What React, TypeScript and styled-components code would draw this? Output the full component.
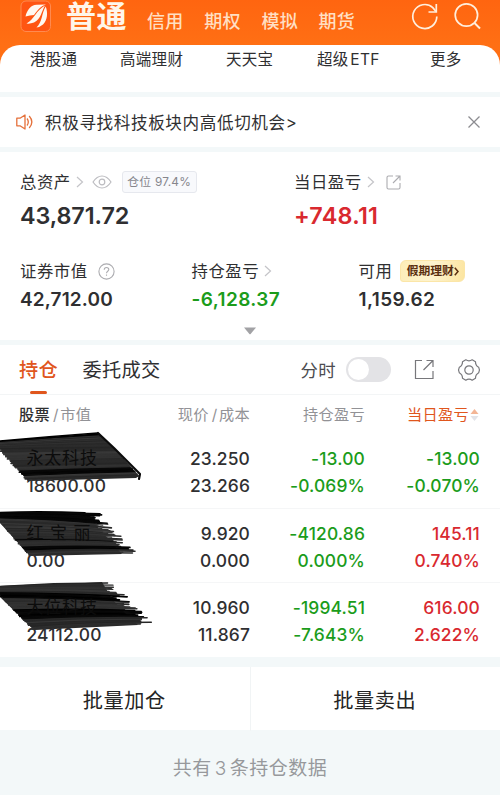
import React from "react";
import styled, { createGlobalStyle } from "styled-components";

const GlobalStyle = createGlobalStyle`
  * { box-sizing: border-box; }
  body {
    margin: 0;
    background: #f3f8f9;
    font-family: Inter, "Noto Sans CJK SC", sans-serif;
    color: #2f2f31;
  }
`;

const GREEN = "#1b9c1b";
const RED = "#d9292f";
const ORANGE = "#e0561d";

const Screen = styled.div`
  width: 500px;
  height: 795px;
  overflow: hidden;
  display: flex;
  flex-direction: column;
  background: #f3f8f9;
  white-space: nowrap;
`;

const TopArea = styled.header`
  height: 92px;
  background: linear-gradient(#ff6510, #ff6f14 45px);
  display: flex;
  flex-direction: column;
`;

const TopBar = styled.div`
  height: 45px;
  display: flex;
  padding-left: 20px;
`;

const BrandTitle = styled.h1`
  margin: 0 0 0 15px;
  width: 81px;
  font-size: 30px;
  line-height: 33px;
  font-weight: 700;
  letter-spacing: 0.4px;
  color: #fff6ea;
`;

const AccountTab = styled.span`
  width: 57.2px;
  font-size: 18px;
  line-height: 43px;
  font-weight: 500;
  letter-spacing: 0.3px;
  color: #ffdfc2;
`;

const TopIcons = styled.div`
  margin-left: auto;
  display: flex;
  gap: 14px;
  padding: 0 18px 0 0;
`;

const Services = styled.nav`
  height: 47px;
  background: #fff;
  border-radius: 20px 20px 0 0;
  display: grid;
  grid-template-columns: 90px 106px 91px 113px 1fr;
  padding-left: 30px;
  font-size: 15.5px;
  letter-spacing: 0.3px;
  line-height: 29px;
`;

const Notice = styled.section`
  margin-top: 5px;
  height: 50px;
  background: #fff;
  display: flex;
  align-items: center;
  padding: 0 19px 0 15px;
`;

const NoticeText = styled.span`
  margin-left: 11px;
  flex: 1;
  font-size: 16.6px;
  letter-spacing: 0.6px;
`;

const Assets = styled.section`
  margin-top: 5px;
  height: 188px;
  background: #fff;
  padding: 17px 20px 0;
  display: flex;
  flex-direction: column;
`;

const AssetRow = styled.div<{ $cols: string; $height: number }>`
  display: grid;
  grid-template-columns: ${(p) => p.$cols};
  height: ${(p) => p.$height}px;
`;

const AssetLabel = styled.div`
  display: flex;
  align-items: center;
  height: 26px;
  line-height: 24px;
  font-size: 16.4px;
  letter-spacing: 0.5px;
`;

const Amount = styled.div<{ $color?: string; $large?: boolean; $spacing?: number }>`
  color: ${(p) => p.$color ?? "#2f2f31"};
  font-weight: 600;
  font-size: ${(p) => (p.$large ? 23.4 : 19)}px;
  line-height: ${(p) => (p.$large ? 42 : 32)}px;
  letter-spacing: ${(p) => p.$spacing ?? (p.$large ? -0.1 : 0.15)}px;
`;

const Gap = styled.span<{ $w: number }>`
  flex: none;
  width: ${(p) => p.$w}px;
`;

const PositionTag = styled.span`
  height: 22px;
  width: 75px;
  display: flex;
  align-items: center;
  justify-content: center;
  border: 1px solid #e6e8ee;
  border-radius: 3px;
  background: #f8f9fc;
  color: #86868c;
  font-size: 11.8px;
  letter-spacing: 0.25px;
`;

const HolidayTag = styled.span`
  height: 22px;
  width: 65px;
  display: flex;
  align-items: center;
  justify-content: center;
  border: 1px solid #fbe6a8;
  border-radius: 6px 3px 6px 3px;
  background: linear-gradient(100deg, #fdeeb8, #fdf3cf 50%, #fce5a0);
  color: #5a2f10;
  font-weight: 700;
  font-size: 11.8px;
  letter-spacing: 0;
`;

const ExpandRow = styled.div`
  display: flex;
  justify-content: center;
`;

const Tabs = styled.section`
  margin-top: 5px;
  height: 49.5px;
  background: #fff;
  border-bottom: 1px solid #f3f5f6;
  display: flex;
  align-items: center;
  padding: 1px 19px 0;
`;

const Tab = styled.div<{ $active?: boolean }>`
  height: 49px;
  margin-right: 24.5px;
  font-size: 19.2px;
  line-height: 51px;
  letter-spacing: 0.3px;
  font-weight: ${(p) => (p.$active ? 500 : 400)};
  color: ${(p) => (p.$active ? ORANGE : "#2f2f31")};
  display: flex;
  flex-direction: column;
  align-items: center;
  &::after {
    content: "";
    flex: none;
    display: ${(p) => (p.$active ? "block" : "none")};
    width: 17px;
    height: 3.5px;
    margin-top: -5.5px;
    border-radius: 2px;
    background: ${ORANGE};
  }
`;

const ToggleLabel = styled.span`
  margin-left: auto;
  margin-right: 10px;
  font-size: 17.4px;
  letter-spacing: 0.4px;
  color: #4c4c50;
`;

const Toggle = styled.span`
  width: 45px;
  height: 25px;
  border-radius: 13px;
  background: #e3e3e6;
  padding: 2px;
  &::before {
    content: "";
    display: block;
    width: 21px;
    height: 21px;
    border-radius: 50%;
    background: #fff;
  }
`;

const Holdings = styled.section`
  background: #fff;
  height: 262.5px;
`;

const columns = `
  display: grid;
  grid-template-columns: 150px 100px 115px 115px;
`;

const ColumnHeads = styled.div`
  ${columns}
  height: 39.5px;
  line-height: 40px;
  font-size: 15.2px;
  letter-spacing: 0.3px;
  color: #929296;
`;

const Head = styled.span<{ $left?: boolean; $active?: boolean }>`
  display: flex;
  align-items: center;
  justify-content: ${(p) => (p.$left ? "flex-start" : "flex-end")};
  padding-left: ${(p) => (p.$left ? 19 : 0)}px;
  color: ${(p) => (p.$active ? ORANGE : "inherit")};
  b {
    font-weight: 500;
    color: #2f2f31;
  }
  i {
    font-style: normal;
    margin: 0 1.5px 0 3px;
  }
`;

const HoldingRow = styled.div`
  ${columns}
  position: relative;
  isolation: isolate;
  height: 74.5px;
  padding-top: 11.4px;
  font-size: 17.4px;
  font-weight: 500;
  line-height: 27px;
  letter-spacing: 0.15px;
  border-bottom: 1px solid #f5f6f7;
  &:last-child {
    border-bottom: 0;
  }
`;

const NameCell = styled.div`
  padding-left: 26.5px;
`;

const StockName = styled.div<{ $spacing: number }>`
  font-weight: 400;
  font-size: 17px;
  letter-spacing: ${(p) => p.$spacing}px;
  color: #0c0c0c;
`;

const Figures = styled.div<{ $color?: string }>`
  text-align: right;
  color: ${(p) => p.$color ?? "#2f2f31"};
`;

const BrushLayer = styled.svg`
  position: absolute;
  left: 0;
  top: -4px;
  z-index: -1;
  pointer-events: none;
`;

const Actions = styled.section`
  margin-top: 10px;
  height: 63px;
  background: #fff;
  display: grid;
  grid-template-columns: 1fr 1fr;
`;

const Action = styled.button`
  border: 0;
  border-left: 1px solid #f1f4f5;
  &:first-child { border-left: 0; }
  background: none;
  font-family: inherit;
  color: #242424;
  font-size: 20.2px;
  letter-spacing: 0.5px;
  line-height: 61px;
  padding: 3px 1.5px 0 0;
`;

const Footer = styled.footer`
  height: 65px;
  line-height: 77px;
  text-align: center;
  font-size: 19px;
  letter-spacing: 0.5px;
  color: #97999c;
  i {
    font-style: normal;
    font-weight: 300;
    margin: 0 3px;
  }
`;

const Logo = () => (
  <svg width="31" height="33" viewBox="0 0 31 33">
    <rect x="1" y="1" width="29.5" height="30.5" rx="5" fill="#ff5512" stroke="#ff8a50" strokeWidth="1" />
    <g fill="#fff8f0">
      <path d="M5.5 16.5 C7 10 11 5 16.5 4.8 L26 4.5 C20 6.5 17.5 10.5 14 15 Q10 15 5.5 16.5Z" />
      <path d="M6.5 23.5 C14 19.5 16.5 10 25 5.5 C21.5 11.5 21 19 14 22.5 Q10 24 6.5 23.5Z" />
      <path d="M16.5 27.5 C22.5 22 21.5 13 25.8 6.5 C28 13 27.5 20 23 24.5 Q20 27 16.5 27.5Z" />
    </g>
  </svg>
);

const Chevron = () => (
  <svg width="8" height="12" viewBox="0 0 8 12" fill="none" stroke="#c4c4c8" strokeWidth="1.2">
    <path d="M1 1 L6.5 6 L1 11" />
  </svg>
);

type BrushShape = {
  left: [number, number][];
  right: [number, number][];
  rag: number;
  /* Near-black bands, as fractions of the stroke's height. */
  bands: [number, number][];
  base: string;
};

const brushes: BrushShape[] = [
  {
    left: [[-8, 12], [0, 19], [28, 50]],
    right: [[98, 3], [113, 18], [139, 46]],
    rag: 1,
    bands: [[0, 0.06], [0.8, 0.92]],
    base: "M0 16 L98 3 L114 18 L139 46 L136 48 L28 51 L0 18Z",
  },
  {
    left: [[-8, 8], [0, 15], [30, 50]],
    right: [[100, 8], [112, 22], [138, 48]],
    rag: 17,
    bands: [[0, 0.28], [0.7, 0.74], [0.85, 0.92]],
    base: "M0 9 L94 8 L96 20 L108 34 L122 49 L30 51 L0 18Z",
  },
  {
    left: [[-8, 8], [0, 15], [34, 50]],
    right: [[114, 4], [130, 20], [153, 45]],
    rag: 16,
    bands: [[0.3, 0.42], [0.65, 0.82]],
    base: "M0 9 L102 3 L112 20 L126 35 L138 46 L34 51 L0 18Z",
  },
];

const along = (pts: [number, number][], t: number): [number, number] => {
  const i = t < 0.35 ? 0 : 1;
  const k = i === 0 ? t / 0.35 : (t - 0.35) / 0.65;
  return [
    pts[i][0] + (pts[i + 1][0] - pts[i][0]) * k,
    pts[i][1] + (pts[i + 1][1] - pts[i][1]) * k,
  ];
};

/* Dry-brush stroke: a solid body under bristle lines with a ragged right edge. */
const Brush = ({ shape, seed }: { shape: BrushShape; seed: number }) => {
  let s = seed;
  const rnd = () => {
    s = (s * 16807) % 2147483647;
    return s / 2147483647;
  };
  const count = 44;
  const lines = Array.from({ length: count }, (_, n) => {
    const t = n / (count - 1);
    const [x0, y0] = along(shape.left, t);
    const [x1, y1] = along(shape.right, t);
    const dark = shape.bands.some(([a, b]) => t >= a && t <= b);
    const tone = dark ? Math.floor(rnd() * 10) : 36 + Math.floor(rnd() * 22);
    const end = x1 - rnd() * shape.rag;
    const start = x0 - rnd() * 2;
    const bow = shape.rag > 1 ? 2 : 0.6;
    return (
      <path
        key={n}
        d={`M${start} ${y0} Q${(start + end) / 2} ${(y0 + y1) / 2 - bow} ${end} ${y1}`}
        stroke={`rgb(${tone},${tone},${tone})`}
        strokeWidth={1.3 + rnd() * 0.5}
      />
    );
  });
  return (
    <BrushLayer width="160" height="60" viewBox="0 0 160 60" fill="none" strokeLinecap="round">
      <path d={shape.base} fill="#2a2a2a" />
      {lines}
      {shape.rag === 1 && (
        <path d="M98 3 L114 18 L140 44 L139 49" stroke="#0c0c0c" strokeWidth="2.2" strokeLinejoin="round" />
      )}
    </BrushLayer>
  );
};

const holdings = [
  { name: "永太科技", spacing: 0.8, value: "18600.00", price: ["23.250", "23.266"], total: ["-13.00", "-0.069%"], day: ["-13.00", "-0.070%"], dayColor: GREEN },
  { name: "红宝丽", spacing: 6.5, value: "0.00", price: ["9.920", "0.000"], total: ["-4120.86", "0.000%"], day: ["145.11", "0.740%"], dayColor: RED },
  { name: "大位科技", spacing: 0.8, value: "24112.00", price: ["10.960", "11.867"], total: ["-1994.51", "-7.643%"], day: ["616.00", "2.622%"], dayColor: RED },
];

const Pair = ({ values, color }: { values: string[]; color?: string }) => (
  <Figures $color={color}>
    {values.map((v, i) => (
      <div key={i}>{v}</div>
    ))}
  </Figures>
);

export default function App() {
  return (
    <>
      <GlobalStyle />
      <Screen>
        <TopArea>
          <TopBar>
            <Logo />
            <BrandTitle>普通</BrandTitle>
            <AccountTab>信用</AccountTab>
            <AccountTab>期权</AccountTab>
            <AccountTab>模拟</AccountTab>
            <AccountTab>期货</AccountTab>
            <TopIcons>
              <svg width="30" height="32" viewBox="0 0 30 32" fill="none" stroke="#ffeedd" strokeWidth="1.7">
                <path d="M26.8 16.5 A12 12 0 1 1 22.8 7.6 L26 11.5" />
                <path d="M26.3 4 V12 H18.5" />
              </svg>
              <svg width="28" height="32" viewBox="0 0 28 32" fill="none" stroke="#ffeedd" strokeWidth="1.7">
                <circle cx="12.4" cy="15" r="11.2" />
                <path d="M20.5 23 L26 28.5" strokeWidth="2" />
              </svg>
            </TopIcons>
          </TopBar>
          <Services>
            <span>港股通</span>
            <span>高端理财</span>
            <span>天天宝</span>
            <span>超级&#8202;ETF</span>
            <span>更多</span>
          </Services>
        </TopArea>

        <Notice>
          <svg width="19" height="18" viewBox="0 0 19 18" fill="none" stroke="#e5703a" strokeWidth="1.3" strokeLinejoin="round">
            <path d="M1.8 5.2 H5 L10 2 V16 L5 12.8 H1.8 Z" />
            <path d="M12 5.5 Q14.6 9 12 12.5" />
            <path d="M14.2 3 Q19.5 9 14.2 15" />
          </svg>
          <NoticeText>积极寻找科技板块内高低切机会&gt;</NoticeText>
          <svg width="14" height="14" viewBox="0 0 14 14" stroke="#8c8c90" strokeWidth="1.3">
            <path d="M1.5 1.5 L12.5 12.5 M12.5 1.5 L1.5 12.5" />
          </svg>
        </Notice>

        <Assets>
          <AssetRow $cols="274px 1fr" $height={89}>
            <div>
              <AssetLabel>
                总资产
                <Gap $w={5} />
                <Chevron />
                <Gap $w={8} />
                <svg width="20" height="14" viewBox="0 0 20 14" fill="none" stroke="#bcbcc0" strokeWidth="1.2">
                  <path d="M1 7 Q5 1 10 1 T19 7 Q15 13 10 13 T1 7Z" />
                  <circle cx="10" cy="7" r="2.8" />
                </svg>
                <Gap $w={10} />
                <PositionTag>仓位 97.4%</PositionTag>
              </AssetLabel>
              <Amount $large>43,871.72</Amount>
            </div>
            <div>
              <AssetLabel>
                当日盈亏
                <Gap $w={5} />
                <Chevron />
                <Gap $w={11} />
                <svg width="15" height="15" viewBox="0 0 15 15" fill="none" stroke="#acacb0" strokeWidth="1.1">
                  <path d="M7 1 H2.5 Q1 1 1 2.5 V12.5 Q1 14 2.5 14 H12.5 Q14 14 14 12.5 V8" />
                  <path d="M9.5 1 H14 V5.5 M14 1 L7 8" />
                </svg>
              </AssetLabel>
              <Amount $large $color={RED} $spacing={0.25}>+748.11</Amount>
            </div>
          </AssetRow>
          <AssetRow $cols="171.5px 167px 1fr" $height={69}>
            <div>
              <AssetLabel>
                证券市值
                <Gap $w={10} />
                <svg width="17" height="17" viewBox="0 0 17 17" fill="none" stroke="#acacb0" strokeWidth="1.1">
                  <circle cx="8.5" cy="8.5" r="7.6" />
                  <path d="M6.2 6.8 C6.2 3.6 10.8 3.8 10.8 6.6 C10.8 8.3 8.5 8.3 8.5 10.3 M8.5 11.5 V12.8" />
                </svg>
              </AssetLabel>
              <Amount>42,712.00</Amount>
            </div>
            <div>
              <AssetLabel>
                持仓盈亏
                <Gap $w={5} />
                <Chevron />
              </AssetLabel>
              <Amount $color={GREEN} $spacing={0.4}>-6,128.37</Amount>
            </div>
            <div>
              <AssetLabel>
                可用
                <Gap $w={8} />
                <HolidayTag>
                  假期理财
                  <svg width="5" height="9" viewBox="0 0 5 9" fill="none" stroke="#5a2f10" strokeWidth="1.5">
                    <path d="M0.8 0.8 L4 4.5 L0.8 8.2" />
                  </svg>
                </HolidayTag>
              </AssetLabel>
              <Amount $spacing={0.4}>1,159.62</Amount>
            </div>
          </AssetRow>
          <ExpandRow>
            <svg width="14" height="8" viewBox="0 0 14 8">
              <path d="M1 0.5 H13 L7.6 7 Q7 7.6 6.4 7Z" fill="#a2a2a5" />
            </svg>
          </ExpandRow>
        </Assets>

        <Tabs>
          <Tab $active>持仓</Tab>
          <Tab>委托成交</Tab>
          <ToggleLabel>分时</ToggleLabel>
          <Toggle />
          <Gap $w={22.5} />
          <svg width="21" height="21" viewBox="0 0 21 21" fill="none" stroke="#77777b" strokeWidth="1.2">
            <path d="M8 1.5 H1.5 V19.5 H19 V12" />
            <path d="M12.5 1.5 H19 V8 M19 1.5 L9.5 11" />
          </svg>
          <Gap $w={22.5} />
          <svg width="24" height="24" viewBox="0 0 24 24" fill="none" stroke="#77777b" strokeWidth="1.2" strokeLinejoin="round">
            <circle cx="12" cy="12" r="4.2" />
            <path d="M8.8 1.8 Q12 3.8 15.2 1.8 L18.5 3.7 Q18.4 7.5 21.7 9.3 Q23.2 12 21.7 14.7 Q18.4 16.5 18.5 20.3 L15.2 22.2 Q12 20.2 8.8 22.2 L5.5 20.3 Q5.6 16.5 2.3 14.7 Q0.8 12 2.3 9.3 Q5.6 7.5 5.5 3.7 Z" />
          </svg>
        </Tabs>

        <Holdings>
          <ColumnHeads>
            <Head $left><b>股票</b><i>/</i>市值</Head>
            <Head>现价<i>/</i>成本</Head>
            <Head>持仓盈亏</Head>
            <Head $active>
              当日盈亏
              <svg width="11" height="14" viewBox="0 0 11 14">
                <path d="M1.5 6 L5.5 1 L9.5 6Z" fill="#f3b595" />
                <path d="M1.5 8 L5.5 13 L9.5 8Z" fill="#e2e3e8" />
              </svg>
            </Head>
          </ColumnHeads>
          {holdings.map((h, i) => (
            <HoldingRow key={h.name}>
              <Brush shape={brushes[i]} seed={4321 + i * 977} />
              <NameCell>
                <StockName $spacing={h.spacing}>{h.name}</StockName>
                {h.value}
              </NameCell>
              <Pair values={h.price} />
              <Pair values={h.total} color={GREEN} />
              <Pair values={h.day} color={h.dayColor} />
            </HoldingRow>
          ))}
        </Holdings>

        <Actions>
          <Action>批量加仓</Action>
          <Action>批量卖出</Action>
        </Actions>
        <Footer>共有<i>3</i>条持仓数据</Footer>
      </Screen>
    </>
  );
}
